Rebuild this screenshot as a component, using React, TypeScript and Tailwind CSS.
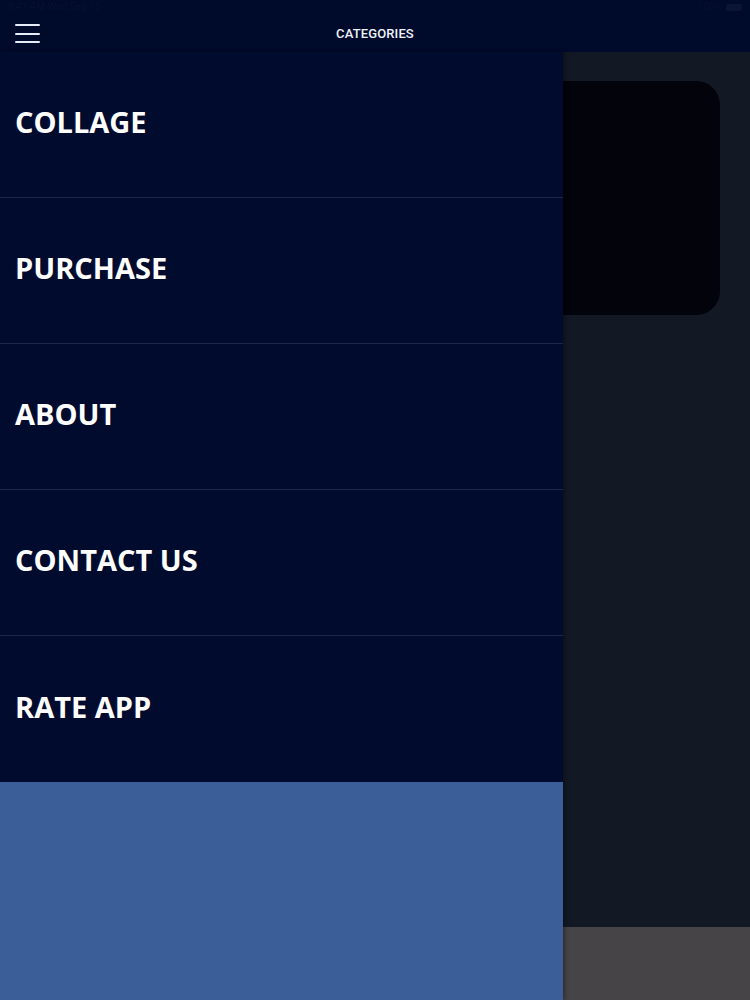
const MENU_ITEMS = ['COLLAGE', 'PURCHASE', 'ABOUT', 'CONTACT US', 'RATE APP']

export default function App() {
  return (
    <div className="w-[750px] h-[1000px] flex flex-col overflow-hidden bg-[#000a2a]">
      {/* Header */}
      <div className="h-[52px] flex flex-col bg-[#000a2a] shrink-0">
        <div className="h-[14px] flex items-center justify-between px-[8px] text-[10px] leading-none text-[#06102f] font-['Roboto',sans-serif]">
          <span>9:41 AM  Wed Sep 18</span>
          <span className="flex items-center gap-1">
            100%
            <span className="w-[16px] h-[7px] rounded-[2px] bg-[#0a1434]" />
          </span>
        </div>
        <div className="relative h-[38px] flex items-center justify-center">
          <button className="absolute left-[15px] top-[10px] flex flex-col gap-[6.5px]">
            <span className="block w-[25px] h-[2px] bg-[#e6ecf7] rounded-full" />
            <span className="block w-[25px] h-[2px] bg-[#e6ecf7] rounded-full" />
            <span className="block w-[25px] h-[2px] bg-[#e6ecf7] rounded-full" />
          </button>
          <span className="text-[13px] font-medium text-[#eef2fa] font-['Roboto',sans-serif] tracking-[0.01em] pt-[1px]">
            CATEGORIES
          </span>
        </div>
      </div>

      {/* Body */}
      <div className="flex-1 flex min-h-0">
        {/* Drawer */}
        <div className="w-[563px] shrink-0 flex flex-col bg-[#3b5e98] shadow-[2px_0_4px_rgba(0,0,0,0.35)] z-10">
          {MENU_ITEMS.map((label, i) => (
            <div
              key={label}
              className={`h-[146px] flex items-center px-[15px] pb-[6px] bg-[#010b2d] ${
                i < MENU_ITEMS.length - 1 ? 'border-b border-[#1c2848]' : ''
              }`}
            >
              <span className="text-[29px] font-bold text-white font-['Open_Sans',sans-serif] leading-none">
                {label}
              </span>
            </div>
          ))}
          <div className="flex-1 bg-[#3b5e98]" />
        </div>

        {/* Content behind drawer */}
        <div className="flex-1 flex flex-col">
          <div className="flex-1 bg-[#121824] pt-[29px] pr-[30px]">
            <div className="h-[234px] bg-[#02030b] rounded-r-[24px]" />
          </div>
          <div className="h-[73px] bg-[#464446]" />
        </div>
      </div>
    </div>
  )
}
